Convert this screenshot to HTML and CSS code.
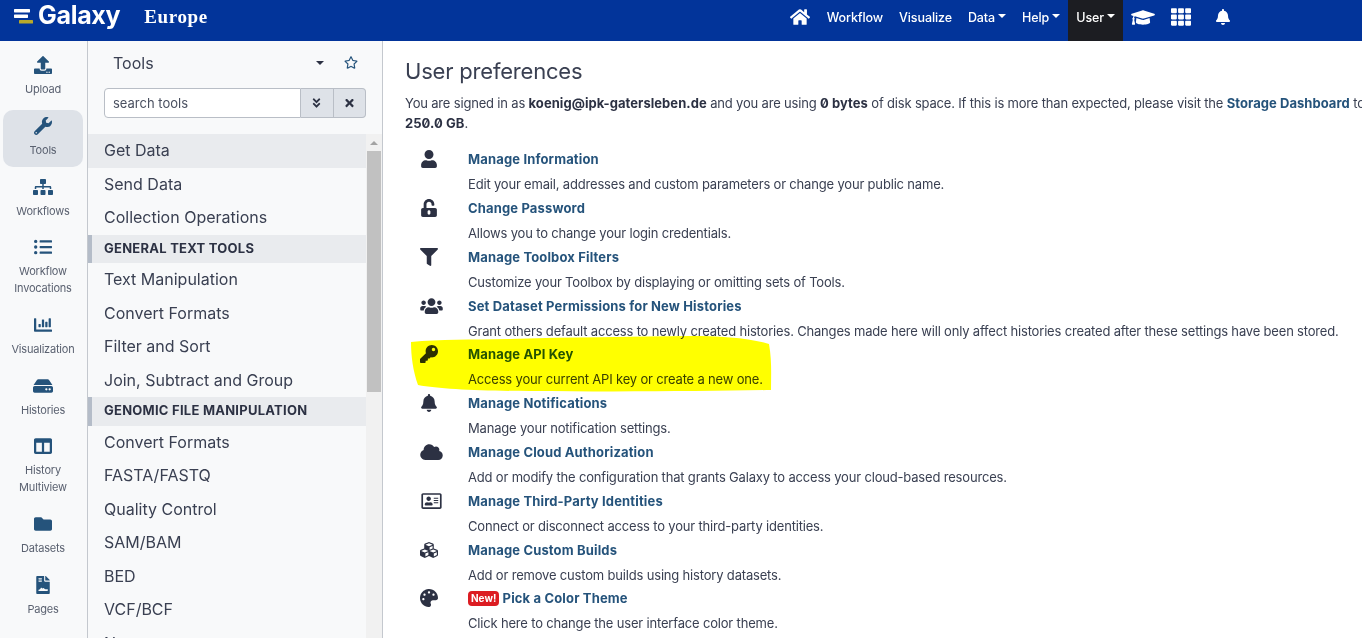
FILE: index.html
```html
<!DOCTYPE html>
<html lang="en">
<head>
    <meta charset="UTF-8">
    <meta name="viewport" content="width=device-width, initial-scale=1.0">
    <title>Galaxy Europe - User preferences</title>
    <link rel="stylesheet" href="styles.css">
</head>
<body>
    <!-- Ikoner -->
    <svg class="icon-defs" aria-hidden="true">
        <symbol id="i-home" viewBox="0 0 576 512"><path d="M280.37 148.26L96 300.11V464a16 16 0 0 0 16 16l112.06-.29a16 16 0 0 0 15.92-16V368a16 16 0 0 1 16-16h64a16 16 0 0 1 16 16v95.64a16 16 0 0 0 16 16.05L464 480a16 16 0 0 0 16-16V300L295.67 148.26a12.19 12.19 0 0 0-15.3 0zM571.6 251.47L488 182.56V44.05a12 12 0 0 0-12-12h-56a12 12 0 0 0-12 12v72.61L318.47 43a48 48 0 0 0-61 0L4.34 251.47a12 12 0 0 0-1.6 16.9l25.5 31A12 12 0 0 0 45.15 301l235.22-193.74a12.19 12.19 0 0 1 15.3 0L530.9 301a12 12 0 0 0 16.9-1.6l25.5-31a12 12 0 0 0-1.7-16.93z"/></symbol>
        <symbol id="i-cap" viewBox="0 0 640 512"><path d="M622.34 153.2L343.4 67.5c-15.2-4.67-31.6-4.67-46.79 0L17.66 153.2c-23.54 7.23-23.54 38.36 0 45.59l48.63 14.94c-10.67 13.19-17.23 29.28-17.88 46.9C38.78 266.15 32 276.11 32 288c0 10.78 5.68 19.85 13.86 25.65L20.33 428.53C18.11 438.52 25.71 448 35.94 448h56.11c10.24 0 17.84-9.48 15.62-19.47L82.14 313.65C90.32 307.85 96 298.78 96 288c0-11.57-6.47-21.25-15.66-26.87.76-15.02 8.44-28.3 20.69-36.72L296.6 284.5c9.06 2.78 26.44 6.25 46.79 0l278.95-85.7c23.55-7.24 23.55-38.36 0-45.6zM352.79 315.09c-28.53 8.76-52.84 3.92-65.59 0l-145.02-44.55L128 384c0 35.35 85.96 64 192 64s192-28.65 192-64l-14.18-113.47-145.03 44.56z"/></symbol>
        <symbol id="i-th" viewBox="0 0 512 512"><path d="M149.333 56v80c0 13.255-10.745 24-24 24H24c-13.255 0-24-10.745-24-24V56c0-13.255 10.745-24 24-24h101.333c13.255 0 24 10.745 24 24zm181.334 240v-80c0-13.255-10.745-24-24-24H205.333c-13.255 0-24 10.745-24 24v80c0 13.255 10.745 24 24 24h101.333c13.256 0 24.001-10.745 24.001-24zm32-240v80c0 13.255 10.745 24 24 24H488c13.255 0 24-10.745 24-24V56c0-13.255-10.745-24-24-24H386.667c-13.255 0-24 10.745-24 24zm-32 80V56c0-13.255-10.745-24-24-24H205.333c-13.255 0-24 10.745-24 24v80c0 13.255 10.745 24 24 24h101.333c13.256 0 24.001-10.745 24.001-24zm-205.334 56H24c-13.255 0-24 10.745-24 24v80c0 13.255 10.745 24 24 24h101.333c13.255 0 24-10.745 24-24v-80c0-13.255-10.745-24-24-24zM0 376v80c0 13.255 10.745 24 24 24h101.333c13.255 0 24-10.745 24-24v-80c0-13.255-10.745-24-24-24H24c-13.255 0-24 10.745-24 24zm386.667-56H488c13.255 0 24-10.745 24-24v-80c0-13.255-10.745-24-24-24H386.667c-13.255 0-24 10.745-24 24v80c0 13.255 10.745 24 24 24zm0 160H488c13.255 0 24-10.745 24-24v-80c0-13.255-10.745-24-24-24H386.667c-13.255 0-24 10.745-24 24v80c0 13.255 10.745 24 24 24zM181.333 376v80c0 13.255 10.745 24 24 24h101.333c13.255 0 24-10.745 24-24v-80c0-13.255-10.745-24-24-24H205.333c-13.255 0-24 10.745-24 24z"/></symbol>
        <symbol id="i-bell" viewBox="0 0 448 512"><path d="M224 512c35.32 0 63.97-28.65 63.97-64H160.03c0 35.35 28.65 64 63.97 64zm215.39-149.71c-19.32-20.76-55.47-51.99-55.47-154.29 0-77.7-54.48-139.9-127.94-155.16V32c0-17.67-14.32-32-31.98-32s-31.98 14.33-31.98 32v20.84C118.56 68.1 64.08 130.3 64.08 208c0 102.3-36.15 133.53-55.47 154.29-6 6.45-8.66 14.16-8.61 21.71.11 16.4 12.98 32 32.1 32h383.8c19.12 0 32-15.6 32.1-32 .05-7.55-2.61-15.27-8.61-21.71z"/></symbol>
        <symbol id="i-upload" viewBox="0 0 512 512"><path d="M296 384h-80c-13.3 0-24-10.7-24-24V192h-87.7c-17.8 0-26.7-21.5-14.1-34.1L242.3 5.7c7.5-7.5 19.8-7.5 27.3 0l152.2 152.2c12.6 12.6 3.7 34.1-14.1 34.1H320v168c0 13.3-10.7 24-24 24zm216-8v112c0 13.3-10.7 24-24 24H24c-13.3 0-24-10.7-24-24V376c0-13.3 10.7-24 24-24h136v8c0 30.9 25.1 56 56 56h80c30.9 0 56-25.1 56-56v-8h136c13.3 0 24 10.7 24 24zm-124 88c0-11-9-20-20-20s-20 9-20 20 9 20 20 20 20-9 20-20zm64 0c0-11-9-20-20-20s-20 9-20 20 9 20 20 20 20-9 20-20z"/></symbol>
        <symbol id="i-wrench" viewBox="0 0 512 512"><path d="M507.73 109.1c-2.24-9.03-13.54-12.09-20.12-5.51l-74.36 74.36-67.88-11.31-11.31-67.88 74.36-74.36c6.62-6.62 3.43-17.9-5.66-20.16-47.38-11.74-99.55.91-136.58 37.93-39.64 39.64-50.55 97.1-34.05 147.2L18.74 402.76c-24.99 24.99-24.99 65.51 0 90.5 24.99 24.99 65.51 24.99 90.5 0l213.21-213.21c50.12 16.71 107.47 5.68 147.37-34.22 37.07-37.07 49.7-89.32 37.91-136.73zM64 472c-13.25 0-24-10.75-24-24 0-13.26 10.75-24 24-24s24 10.74 24 24c0 13.25-10.75 24-24 24z"/></symbol>
        <symbol id="i-sitemap" viewBox="0 0 640 512"><path d="M128 352H32c-17.67 0-32 14.33-32 32v96c0 17.67 14.33 32 32 32h96c17.67 0 32-14.33 32-32v-96c0-17.67-14.33-32-32-32zm-24-80h192v48h48v-48h192v48h48v-57.59c0-21.17-17.23-38.41-38.41-38.41H344v-64h40c17.67 0 32-14.33 32-32V32c0-17.67-14.33-32-32-32H256c-17.67 0-32 14.33-32 32v96c0 17.67 14.33 32 32 32h40v64H94.41C73.23 224 56 241.23 56 262.41V320h48v-48zm264 80h-96c-17.67 0-32 14.33-32 32v96c0 17.67 14.33 32 32 32h96c17.67 0 32-14.33 32-32v-96c0-17.67-14.33-32-32-32zm240 0h-96c-17.67 0-32 14.33-32 32v96c0 17.67 14.33 32 32 32h96c17.67 0 32-14.33 32-32v-96c0-17.67-14.33-32-32-32z"/></symbol>
        <symbol id="i-list" viewBox="0 0 512 512"><path d="M48 48a48 48 0 1 0 48 48 48 48 0 0 0-48-48zm0 160a48 48 0 1 0 48 48 48 48 0 0 0-48-48zm0 160a48 48 0 1 0 48 48 48 48 0 0 0-48-48zm448 16H176a16 16 0 0 0-16 16v32a16 16 0 0 0 16 16h320a16 16 0 0 0 16-16v-32a16 16 0 0 0-16-16zm0-320H176a16 16 0 0 0-16 16v32a16 16 0 0 0 16 16h320a16 16 0 0 0 16-16V80a16 16 0 0 0-16-16zm0 160H176a16 16 0 0 0-16 16v32a16 16 0 0 0 16 16h320a16 16 0 0 0 16-16v-32a16 16 0 0 0-16-16z"/></symbol>
        <symbol id="i-chart" viewBox="0 0 512 512"><path d="M332.8 320h38.4c6.4 0 12.8-6.4 12.8-12.8V172.8c0-6.4-6.4-12.8-12.8-12.8h-38.4c-6.4 0-12.8 6.4-12.8 12.8v134.4c0 6.4 6.4 12.8 12.8 12.8zm96 0h38.4c6.4 0 12.8-6.4 12.8-12.8V76.8c0-6.4-6.4-12.8-12.8-12.8h-38.4c-6.4 0-12.8 6.4-12.8 12.8v230.4c0 6.4 6.4 12.8 12.8 12.8zm-288 0h38.4c6.4 0 12.8-6.4 12.8-12.8v-70.4c0-6.4-6.4-12.8-12.8-12.8h-38.4c-6.4 0-12.8 6.4-12.8 12.8v70.4c0 6.4 6.4 12.8 12.8 12.8zm96 0h38.4c6.4 0 12.8-6.4 12.8-12.8V108.8c0-6.4-6.4-12.8-12.8-12.8h-38.4c-6.4 0-12.8 6.4-12.8 12.8v198.4c0 6.4 6.4 12.8 12.8 12.8zM496 384H64V80c0-8.84-7.16-16-16-16H16C7.16 64 0 71.16 0 80v336c0 17.67 14.33 32 32 32h464c8.84 0 16-7.16 16-16v-32c0-8.84-7.16-16-16-16z"/></symbol>
        <symbol id="i-hdd" viewBox="0 0 576 512"><path d="M576 304v96c0 26.51-21.49 48-48 48H48c-26.51 0-48-21.49-48-48v-96c0-26.51 21.49-48 48-48h480c26.51 0 48 21.49 48 48zm-48-80a79.557 79.557 0 0 1 30.777 6.165L462.25 85.374A48.003 48.003 0 0 0 422.311 64H153.689a48 48 0 0 0-39.938 21.374L17.223 230.165A79.557 79.557 0 0 1 48 224h480zm-48 96c-17.673 0-32 14.327-32 32s14.327 32 32 32 32-14.327 32-32-14.327-32-32-32zm-96 0c-17.673 0-32 14.327-32 32s14.327 32 32 32 32-14.327 32-32-14.327-32-32-32z"/></symbol>
        <symbol id="i-columns" viewBox="0 0 512 512"><path d="M464 32H48C21.49 32 0 53.49 0 80v352c0 26.51 21.49 48 48 48h416c26.51 0 48-21.49 48-48V80c0-26.51-21.49-48-48-48zM224 416H64V160h160v256zm224 0H288V160h160v256z"/></symbol>
        <symbol id="i-folder" viewBox="0 0 512 512"><path d="M464 128H272l-64-64H48C21.49 64 0 85.49 0 112v288c0 26.51 21.49 48 48 48h416c26.51 0 48-21.49 48-48V176c0-26.51-21.49-48-48-48z"/></symbol>
        <symbol id="i-page" viewBox="0 0 384 512"><path d="M377 105L279.1 7c-4.5-4.5-10.6-7-17-7H256v128h128v-6.1c0-6.3-2.5-12.4-7-16.9z"/><path d="M224 136V0H24C10.7 0 0 10.7 0 24v464c0 13.3 10.7 24 24 24h336c13.3 0 24-10.7 24-24V160H248c-13.2 0-24-10.8-24-24zM64 72c0-4.4 3.6-8 8-8h80c4.4 0 8 3.6 8 8v16c0 4.4-3.6 8-8 8H72c-4.4 0-8-3.6-8-8V72zm0 64c0-4.4 3.6-8 8-8h80c4.4 0 8 3.6 8 8v16c0 4.4-3.6 8-8 8H72c-4.4 0-8-3.6-8-8v-16zm256 280c0 4.4-3.6 8-8 8H72c-4.4 0-8-3.6-8-8v-16c0-4.4 3.6-8 8-8 25 0 46-22 56-50 5-14 25-14 31 0 6 13 16 20 28 6 7-8 20-8 27 1 11 14 26 25 47 25h60c4.4 0 8 3.6 8 8v34z"/></symbol>
        <symbol id="i-star" viewBox="0 0 576 512"><path d="M528.1 171.5L382 150.2 316.7 17.8c-11.7-23.6-45.6-23.9-57.4 0L194 150.2 47.9 171.5c-26.2 3.8-36.7 36.1-17.7 54.6l105.7 103-25 145.5c-4.5 26.3 23.2 46 46.4 33.7L288 439.6l130.7 68.7c23.2 12.2 50.9-7.4 46.4-33.7l-25-145.5 105.7-103c19-18.5 8.5-50.8-17.7-54.6zM388.6 312.3l23.7 138.4L288 385.4l-124.3 65.3 23.7-138.4-100.6-98 139-20.2 62.2-126 62.2 126 139 20.2-100.6 98z"/></symbol>
        <symbol id="i-double" viewBox="0 0 320 512"><path d="M143 256.3L7 120.3c-9.4-9.4-9.4-24.6 0-33.9l22.6-22.6c9.4-9.4 24.6-9.4 33.9 0l96.4 96.4 96.4-96.4c9.4-9.4 24.6-9.4 33.9 0L313 86.3c9.4 9.4 9.4 24.6 0 33.9l-136 136c-9.4 9.5-24.6 9.5-34 .1zm34 192l136-136c9.4-9.4 9.4-24.6 0-33.9l-22.6-22.6c-9.4-9.4-24.6-9.4-33.9 0L160 352.1l-96.4-96.4c-9.4-9.4-24.6-9.4-33.9 0L7 278.3c-9.4 9.4-9.4 24.6 0 33.9l136 136c9.4 9.5 24.6 9.5 34 .1z"/></symbol>
        <symbol id="i-times" viewBox="0 0 352 512"><path d="M242.72 256l100.07-100.07c12.28-12.28 12.28-32.19 0-44.48l-22.24-22.24c-12.28-12.28-32.19-12.28-44.48 0L176 189.28 75.93 89.21c-12.28-12.28-32.19-12.28-44.48 0L9.21 111.45c-12.28 12.28-12.28 32.19 0 44.48L109.28 256 9.21 356.07c-12.28 12.28-12.28 32.19 0 44.48l22.24 22.24c12.28 12.28 32.2 12.28 44.48 0L176 322.72l100.07 100.07c12.28 12.28 32.2 12.28 44.48 0l22.24-22.24c12.28-12.28 12.28-32.19 0-44.48L242.72 256z"/></symbol>
        <symbol id="i-user" viewBox="0 0 448 512"><path d="M224 256c70.7 0 128-57.3 128-128S294.7 0 224 0 96 57.3 96 128s57.3 128 128 128zm89.6 32h-16.7c-22.2 10.2-46.9 16-72.9 16s-50.6-5.8-72.9-16h-16.7C60.2 288 0 348.2 0 422.4V464c0 26.5 21.5 48 48 48h352c26.5 0 48-21.5 48-48v-41.6c0-74.2-60.2-134.4-134.4-134.4z"/></symbol>
        <symbol id="i-unlock" viewBox="0 0 448 512"><path d="M400 256H152V152.9c0-39.6 31.7-72.5 71.3-72.9 40-.4 72.7 32.1 72.7 72v16c0 13.3 10.7 24 24 24h32c13.3 0 24-10.7 24-24v-16C376 68 307.5-.3 223.5 0 139.5.3 72 69.5 72 153.5V256H48c-26.5 0-48 21.5-48 48v160c0 26.5 21.5 48 48 48h352c26.5 0 48-21.5 48-48V304c0-26.5-21.5-48-48-48zM264 408c0 22.1-17.9 40-40 40s-40-17.9-40-40v-48c0-22.1 17.9-40 40-40s40 17.9 40 40v48z"/></symbol>
        <symbol id="i-filter" viewBox="0 0 512 512"><path d="M487.976 0H24.028C2.71 0-8.047 25.866 7.058 40.971L192 225.941V432c0 7.831 3.821 15.17 10.237 19.662l80 55.98C298.02 518.69 320 507.493 320 487.98V225.941l184.947-184.97C520.021 25.896 509.338 0 487.976 0z"/></symbol>
        <symbol id="i-users" viewBox="0 0 640 512"><path d="M96 224c35.3 0 64-28.7 64-64s-28.7-64-64-64-64 28.7-64 64 28.7 64 64 64zm448 0c35.3 0 64-28.7 64-64s-28.7-64-64-64-64 28.7-64 64 28.7 64 64 64zm32 32h-64c-17.6 0-33.5 7.1-45.1 18.6 40.3 22.1 68.9 62 75.1 109.4h66c17.7 0 32-14.3 32-32v-32c0-35.3-28.7-64-64-64zm-256 0c61.9 0 112-50.1 112-112S381.9 32 320 32 208 82.1 208 144s50.1 112 112 112zm76.8 32h-8.3c-20.8 10-43.9 16-68.5 16s-47.6-6-68.5-16h-8.3C179.6 288 128 339.6 128 403.2V432c0 26.5 21.5 48 48 48h288c26.5 0 48-21.5 48-48v-28.8c0-63.6-51.6-115.2-115.2-115.2zm-223.7-13.4C161.5 263.1 145.6 256 128 256H64c-35.3 0-64 28.7-64 64v32c0 17.7 14.3 32 32 32h65.9c6.3-47.4 34.9-87.3 75.2-109.4z"/></symbol>
        <symbol id="i-key" viewBox="0 0 512 512"><path d="M512 176.001C512 273.203 433.202 352 336 352c-11.22 0-22.19-1.062-32.827-3.069l-24.012 27.014A23.999 23.999 0 0 1 261.223 384H224v40c0 13.255-10.745 24-24 24h-40v40c0 13.255-10.745 24-24 24H24c-13.255 0-24-10.745-24-24v-78.059c0-6.365 2.529-12.47 7.029-16.971l161.802-161.802C163.108 213.814 160 195.271 160 176 160 78.798 238.797.001 335.999 0 433.488-.001 512 78.511 512 176.001zM336 128c0 26.51 21.49 48 48 48s48-21.49 48-48-21.49-48-48-48-48 21.49-48 48z"/></symbol>
        <symbol id="i-cloud" viewBox="0 0 640 512"><path d="M537.6 226.6c4.1-10.7 6.4-22.4 6.4-34.6 0-53-43-96-96-96-19.7 0-38.1 6-53.3 16.2C367 64.2 315.3 32 256 32c-88.4 0-160 71.6-160 160 0 2.7.1 5.4.2 8.1C40.2 219.8 0 273.2 0 336c0 79.5 64.5 144 144 144h368c70.7 0 128-57.3 128-128 0-61.9-44-113.6-102.4-125.4z"/></symbol>
        <symbol id="i-idcard" viewBox="0 0 576 512"><path d="M528 32H48C21.5 32 0 53.5 0 80v352c0 26.5 21.5 48 48 48h480c26.5 0 48-21.5 48-48V80c0-26.5-21.5-48-48-48zm0 400H48V80h480v352zM208 256c35.3 0 64-28.7 64-64s-28.7-64-64-64-64 28.7-64 64 28.7 64 64 64zm-89.6 128h179.2c12.4 0 22.4-8.6 22.4-19.2v-19.2c0-31.8-30.1-57.6-67.2-57.6-10.8 0-18.7 8-44.8 8-26.9 0-33.4-8-44.8-8-37.1 0-67.2 25.8-67.2 57.6v19.2c0 10.6 10 19.2 22.4 19.2zM360 320h112c4.4 0 8-3.6 8-8v-16c0-4.4-3.6-8-8-8H360c-4.4 0-8 3.6-8 8v16c0 4.4 3.6 8 8 8zm0-64h112c4.4 0 8-3.6 8-8v-16c0-4.4-3.6-8-8-8H360c-4.4 0-8 3.6-8 8v16c0 4.4 3.6 8 8 8zm0-64h112c4.4 0 8-3.6 8-8v-16c0-4.4-3.6-8-8-8H360c-4.4 0-8 3.6-8 8v16c0 4.4 3.6 8 8 8z"/></symbol>
        <symbol id="i-cubes" viewBox="0 0 512 512"><path d="M488.6 250.2L392 214V105.5c0-15-9.3-28.4-23.4-33.7l-100-37.5c-8.1-3.1-17.1-3.1-25.3 0l-100 37.5c-14.1 5.3-23.4 18.7-23.4 33.7V214l-96.6 36.2C9.3 255.5 0 268.9 0 283.9V394c0 13.6 7.7 26.1 19.9 32.2l100 50c10.1 5.1 22.1 5.1 32.2 0l103.9-52 103.9 52c10.1 5.1 22.1 5.1 32.2 0l100-50c12.2-6.1 19.9-18.6 19.9-32.2V283.9c0-15-9.3-28.4-23.4-33.7zM358 214.8l-85 31.9v-68.2l85-37v73.3zM154 104.1l102-38.2 102 38.2v.6l-102 41.4-102-41.4v-.6zm84 291.1l-85 42.5v-79.1l85-38.8v75.4zm0-112l-102 41.4-102-41.4v-.6l102-38.2 102 38.2v.6zm240 112l-85 42.5v-79.1l85-38.8v75.4zm0-112l-102 41.4-102-41.4v-.6l102-38.2 102 38.2v.6z"/></symbol>
        <symbol id="i-palette" viewBox="0 0 512 512"><path d="M204.3 5C104.9 24.4 24.8 104.3 5.2 203.4c-37 187 131.7 326.4 258.8 306.7 41.2-6.4 61.4-54.6 42.5-91.7-23.1-45.4 9.9-98.4 60.9-98.4h79.7c35.8 0 64.8-29.6 64.9-65.3C511.5 97.1 368.1-26.9 204.3 5zM96 320c-17.7 0-32-14.3-32-32s14.3-32 32-32 32 14.3 32 32-14.3 32-32 32zm32-128c-17.7 0-32-14.3-32-32s14.3-32 32-32 32 14.3 32 32-14.3 32-32 32zm128-64c-17.7 0-32-14.3-32-32s14.3-32 32-32 32 14.3 32 32-14.3 32-32 32zm128 64c-17.7 0-32-14.3-32-32s14.3-32 32-32 32 14.3 32 32-14.3 32-32 32z"/></symbol>
    </svg>

    <!-- Toppmeny -->
    <header class="masthead">
        <a class="brand" href="#">
            <svg class="brand-logo" viewBox="0 0 20 17" aria-hidden="true">
                <rect x="0" y="0" width="16" height="3.4" rx="0.6" fill="#fff"/>
                <rect x="0" y="5.5" width="14" height="3.4" rx="0.6" fill="#fff"/>
                <rect x="5" y="11" width="14" height="3.6" rx="0.6" fill="#b9a92a"/>
            </svg>
            <span class="brand-name">Galaxy</span>
            <span class="brand-site">Europe</span>
        </a>
        <nav class="topnav">
            <a class="topnav-home" href="#"><svg class="ico"><use href="#i-home"/></svg></a>
            <a href="#">Workflow</a>
            <a href="#">Visualize</a>
            <a class="has-caret" href="#">Data</a>
            <a class="has-caret" href="#">Help</a>
            <a class="has-caret is-active" href="#">User</a>
            <a class="topnav-cap" href="#"><svg class="ico"><use href="#i-cap"/></svg></a>
            <a class="topnav-th" href="#"><svg class="ico"><use href="#i-th"/></svg></a>
            <a class="topnav-bell" href="#"><svg class="ico"><use href="#i-bell"/></svg></a>
        </nav>
    </header>

    <div class="workspace">
        <!-- Aktivitetsrad -->
        <aside class="activity">
            <a class="activity-item" href="#"><svg class="ico"><use href="#i-upload"/></svg><span>Upload</span></a>
            <a class="activity-item is-current" href="#"><svg class="ico"><use href="#i-wrench"/></svg><span>Tools</span></a>
            <a class="activity-item" href="#"><svg class="ico"><use href="#i-sitemap"/></svg><span>Workflows</span></a>
            <a class="activity-item" href="#"><svg class="ico"><use href="#i-list"/></svg><span>Workflow Invocations</span></a>
            <a class="activity-item" href="#"><svg class="ico"><use href="#i-chart"/></svg><span>Visualization</span></a>
            <a class="activity-item" href="#"><svg class="ico"><use href="#i-hdd"/></svg><span>Histories</span></a>
            <a class="activity-item" href="#"><svg class="ico"><use href="#i-columns"/></svg><span>History Multiview</span></a>
            <a class="activity-item" href="#"><svg class="ico"><use href="#i-folder"/></svg><span>Datasets</span></a>
            <a class="activity-item" href="#"><svg class="ico"><use href="#i-page"/></svg><span>Pages</span></a>
        </aside>

        <!-- Verktygspanel -->
        <section class="tools">
            <div class="tools-head">
                <h2>Tools</h2>
                <span class="tools-caret"></span>
                <svg class="ico tools-star"><use href="#i-star"/></svg>
            </div>
            <div class="tools-search">
                <input type="text" placeholder="search tools">
                <button type="button"><svg class="ico"><use href="#i-double"/></svg></button>
                <button type="button"><svg class="ico"><use href="#i-times"/></svg></button>
            </div>
            <div class="tools-body">
                <ul class="tool-list">
                    <li class="tool is-hover">Get Data</li>
                    <li class="tool">Send Data</li>
                    <li class="tool">Collection Operations</li>
                    <li class="tool-section">General Text Tools</li>
                    <li class="tool">Text Manipulation</li>
                    <li class="tool">Convert Formats</li>
                    <li class="tool">Filter and Sort</li>
                    <li class="tool">Join, Subtract and Group</li>
                    <li class="tool-section">Genomic File Manipulation</li>
                    <li class="tool">Convert Formats</li>
                    <li class="tool">FASTA/FASTQ</li>
                    <li class="tool">Quality Control</li>
                    <li class="tool">SAM/BAM</li>
                    <li class="tool">BED</li>
                    <li class="tool">VCF/BCF</li>
                    <li class="tool">Nanopore</li>
                </ul>
                <div class="scrollbar">
                    <span class="scrollbar-arrow"></span>
                    <span class="scrollbar-thumb"></span>
                </div>
            </div>
        </section>

        <!-- Inställningar -->
        <main class="prefs">
            <h1>User preferences</h1>
            <p class="prefs-intro">You are signed in as <b>koenig@ipk-gatersleben.de</b> and you are using <b>0 bytes</b> of disk space. If this is more than expected, please visit the <a href="#">Storage Dashboard</a> to free up disk space.<br>
            <b>250.0 GB</b>.</p>
            <div class="pref-list">
                <div class="pref"><svg class="ico"><use href="#i-user"/></svg><a href="#">Manage Information</a><p>Edit your email, addresses and custom parameters or change your public name.</p></div>
                <div class="pref"><svg class="ico"><use href="#i-unlock"/></svg><a href="#">Change Password</a><p>Allows you to change your login credentials.</p></div>
                <div class="pref"><svg class="ico"><use href="#i-filter"/></svg><a href="#">Manage Toolbox Filters</a><p>Customize your Toolbox by displaying or omitting sets of Tools.</p></div>
                <div class="pref"><svg class="ico ico-wide"><use href="#i-users"/></svg><a href="#">Set Dataset Permissions for New Histories</a><p>Grant others default access to newly created histories. Changes made here will only affect histories created after these settings have been stored.</p></div>
                <div class="pref"><svg class="ico"><use href="#i-key"/></svg><a href="#">Manage API Key</a><p>Access your current API key or create a new one.</p></div>
                <div class="pref"><svg class="ico"><use href="#i-bell"/></svg><a href="#">Manage Notifications</a><p>Manage your notification settings.</p></div>
                <div class="pref"><svg class="ico ico-wide"><use href="#i-cloud"/></svg><a href="#">Manage Cloud Authorization</a><p>Add or modify the configuration that grants Galaxy to access your cloud-based resources.</p></div>
                <div class="pref"><svg class="ico ico-wide"><use href="#i-idcard"/></svg><a href="#">Manage Third-Party Identities</a><p>Connect or disconnect access to your third-party identities.</p></div>
                <div class="pref"><svg class="ico"><use href="#i-cubes"/></svg><a href="#">Manage Custom Builds</a><p>Add or remove custom builds using history datasets.</p></div>
                <div class="pref"><svg class="ico"><use href="#i-palette"/></svg><a href="#"><span class="badge-new">New!</span> Pick a Color Theme</a><p>Click here to change the user interface color theme.</p></div>
            </div>
            <!-- Gul överstrykning ovanpå API-raden -->
            <svg class="marker" viewBox="0 0 365 60" aria-hidden="true"><path d="M1 6 C30 3 60 4 100 3 C160 1 220 1 280 0 C310 0 340 2 359 8 C362 25 361 40 361 54 C300 55 220 56 120 55 C70 55 30 53 8 49 C3 35 1 20 1 6Z"/></svg>
        </main>
    </div>
</body>
</html>
```

FILE: styles.css
```css
* {
    box-sizing: border-box;
}

html, body {
    height: 100%;
}

body {
    margin: 0;
    overflow: hidden;
    display: flex;
    flex-direction: column;
    font-family: Inter, "Noto Sans", sans-serif;
    font-size: 13px;
    color: #3a4052;
    background-color: #fff;
}

a {
    color: inherit;
    text-decoration: none;
}

.icon-defs {
    display: none;
}

.ico {
    display: block;
    fill: currentColor;
}

/* Toppmeny */
.masthead {
    flex: 0 0 41px;
    display: flex;
    align-items: stretch;
    background-color: #02349a;
    color: #fff;
}

.brand {
    display: flex;
    align-items: flex-start;
    padding-left: 14px;
}

.brand-logo {
    width: 20px;
    height: 17px;
    margin-top: 9px;
}

.brand-name {
    margin-left: 4px;
    font-size: 25px;
    font-weight: 700;
    letter-spacing: -0.3px;
    line-height: 30px;
}

.brand-site {
    margin-left: 24px;
    margin-top: 6px;
    font-family: "Liberation Serif", serif;
    font-size: 19px;
    font-weight: 700;
    letter-spacing: 0.6px;
}

.topnav {
    display: flex;
    align-items: stretch;
    margin-left: auto;
    padding-right: 132px;
}

.topnav a {
    display: flex;
    align-items: center;
    padding: 0 8px 7px;
    font-weight: 500;
    font-size: 12.5px;
    letter-spacing: -0.1px;
}

.has-caret::after {
    content: "";
    margin-left: 3px;
    margin-top: -2px;
    border-top: 4px solid #fff;
    border-left: 4px solid transparent;
    border-right: 4px solid transparent;
}

.topnav .is-active {
    background-color: #1c1d22;
}

.topnav-home .ico {
    width: 20px;
    height: 18px;
}

.topnav .topnav-home {
    padding-right: 9px;
}

.topnav-cap .ico {
    width: 24px;
    height: 19px;
}

.topnav-th .ico {
    width: 20px;
    height: 20px;
}

.topnav-bell .ico {
    width: 14px;
    height: 16px;
}

.topnav .topnav-th {
    padding-right: 17px;
}

.topnav .topnav-bell {
    padding-right: 0;
}

/* Arbetsyta */
.workspace {
    flex: 1;
    display: flex;
    min-height: 0;
}

.activity {
    flex: 0 0 88px;
    display: flex;
    flex-direction: column;
    gap: 4px;
    padding: 8px 3px 0;
    background-color: #f8f9fa;
    border-right: 1px solid #c4c8ce;
    overflow: hidden;
}

.activity-item {
    display: flex;
    flex-direction: column;
    align-items: center;
    padding: 7px 0 8px;
    width: 80px;
    border-radius: 10px;
    text-align: center;
    font-size: 11px;
    line-height: 16.75px;
    letter-spacing: -0.2px;
    color: #5a6170;
}

.activity-item .ico {
    width: 20px;
    height: 18px;
    margin-bottom: 7px;
    color: #25537b;
}

.activity-item.is-current {
    background-color: #dee2e8;
}

/* Verktygspanel */
.tools {
    flex: 0 0 295px;
    min-width: 0;
    display: flex;
    flex-direction: column;
    background-color: #f8f9fa;
    border-right: 1px solid #c4c8ce;
}

.tools-head {
    display: flex;
    align-items: center;
    height: 47px;
    padding: 0 0 4px 25px;
}

.tools-head h2 {
    flex: 1;
    margin: 0;
    font-size: 16px;
    font-weight: 400;
}

.tools-caret {
    margin-right: 20px;
    border-top: 4px solid #2c3143;
    border-left: 4px solid transparent;
    border-right: 4px solid transparent;
}

.tools-star {
    width: 14px;
    height: 13px;
    margin-right: 24px;
    color: #25537b;
}

.tools-search {
    display: flex;
    height: 30px;
    margin: 0 16px 16px;
}

.tools-search input {
    flex: 1;
    width: 0;
    min-width: 0;
    padding: 0 8px;
    font: inherit;
    font-size: 13px;
    color: #2c3143;
    background-color: #fff;
    border: 1px solid #b9bec6;
    border-radius: 4px 0 0 4px;
}

.tools-search input::placeholder {
    color: #4a5060;
    opacity: 1;
}

.tools-search button {
    width: 32.5px;
    display: flex;
    align-items: center;
    justify-content: center;
    padding: 0;
    color: #2c3143;
    background-color: #dee2e8;
    border: 1px solid #b9bec6;
    border-left: none;
}

.tools-search button:last-child {
    border-radius: 0 4px 4px 0;
}

.tools-search .ico {
    width: 9px;
    height: 12px;
}

.tools-body {
    flex: 1;
    display: flex;
    min-height: 0;
    overflow: hidden;
}

.tool-list {
    flex: 1;
    min-width: 0;
    margin: 0;
    padding: 0;
    list-style: none;
}

.tool {
    height: 33.5px;
    padding-left: 16px;
    font-size: 16px;
    line-height: 33.5px;
    white-space: nowrap;
}

.tool.is-hover {
    background-color: #e9ebee;
}

.tool-section {
    height: 28.5px;
    padding-left: 12px;
    font-size: 13px;
    font-weight: 700;
    line-height: 27px;
    letter-spacing: 0.25px;
    text-transform: uppercase;
    color: #2c3143;
    background-color: #e9ebee;
    border-left: 4px solid #b4bcc8;
}

.scrollbar {
    flex: 0 0 16px;
    display: flex;
    flex-direction: column;
    align-items: center;
    background-color: #f1f1f1;
}

.scrollbar-arrow {
    margin-top: 7px;
    border-bottom: 4px solid #a3a3a3;
    border-left: 4px solid transparent;
    border-right: 4px solid transparent;
}

.scrollbar-thumb {
    width: 14px;
    height: 241px;
    margin-top: 6px;
    background-color: #c1c1c1;
}

/* Inställningar */
.prefs {
    position: relative;
    flex: 1;
    min-width: 0;
    padding: 16px 0 0 22px;
    overflow: hidden;
}

.prefs h1 {
    margin: 0;
    font-size: 22px;
    font-weight: 400;
    letter-spacing: -0.2px;
    line-height: 29px;
}

.prefs-intro {
    margin: 7px 0 0;
    font-size: 13px;
    line-height: 20px;
    letter-spacing: -0.18px;
    white-space: nowrap;
}

.prefs-intro b,
.prefs-intro a {
    letter-spacing: 0.05px;
    color: #2c3143;
    font-feature-settings: "zero";
}

.prefs-intro a {
    font-weight: 700;
    color: #25537b;
}

.pref-list {
    margin-top: 16.3px;
    padding-left: 15px;
}

.pref {
    display: grid;
    grid-template-columns: 48px 1fr;
    grid-template-rows: 20px 20px;
    row-gap: 5px;
    height: 48.8px;
    white-space: nowrap;
}

.pref .ico {
    grid-row: 1;
    width: 18px;
    height: 18px;
    margin-top: 1px;
    color: #2c3143;
}

.pref .ico-wide {
    width: 23px;
}

.pref a {
    font-size: 13px;
    font-weight: 700;
    line-height: 20px;
    letter-spacing: 0.15px;
    color: #25537b;
}

.pref p {
    grid-column: 2;
    margin: 0;
    font-size: 13px;
    line-height: 20px;
    letter-spacing: -0.18px;
}

.badge-new {
    display: inline-block;
    padding: 0 3px;
    font-size: 10px;
    line-height: 15px;
    letter-spacing: 0;
    color: #fff;
    background-color: #dc1c22;
    border-radius: 4px;
    vertical-align: 1px;
}

.marker {
    position: absolute;
    left: 27px;
    top: 295px;
    width: 365px;
    height: 60px;
    fill: #ffff00;
    mix-blend-mode: multiply;
}
```
